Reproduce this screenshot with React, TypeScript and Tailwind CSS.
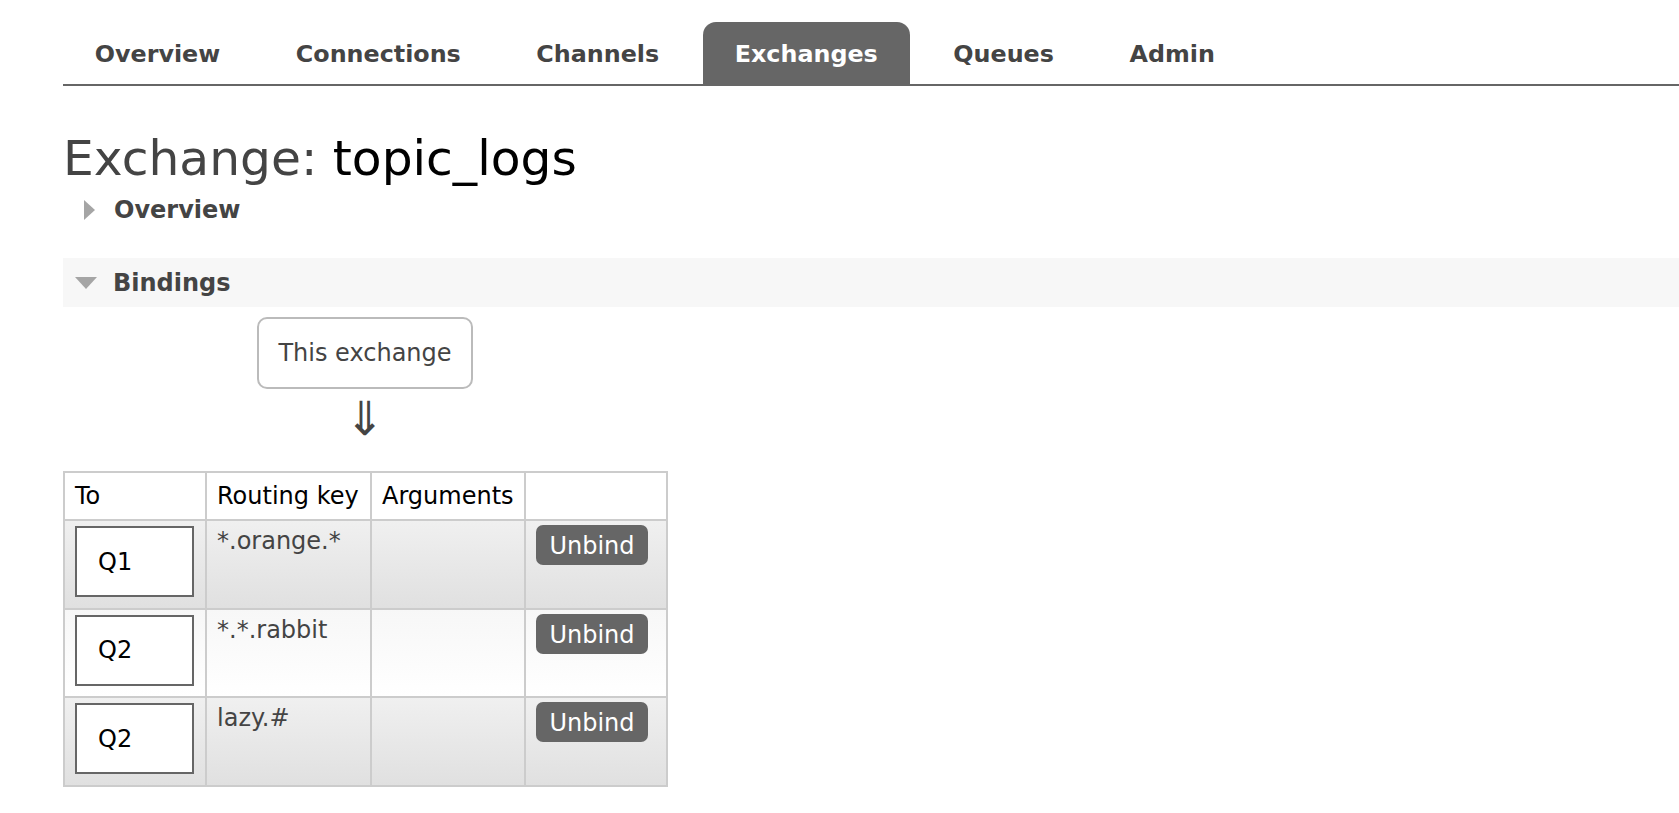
import React from "react";

const tabs = ["Overview", "Connections", "Channels", "Exchanges", "Queues", "Admin"];

const rows = [
  { to: "Q1", key: "*.orange.*", odd: true },
  { to: "Q2", key: "*.*.rabbit", odd: false },
  { to: "Q2", key: "lazy.#", odd: true },
];

export default function App() {
  return (
    <div className="min-h-screen w-full bg-white font-['DejaVu_Sans','Verdana',sans-serif] text-[24px] text-[#444]">
      <div className="pl-[63px] pt-[22px]">
        <ul className="flex gap-3 border-b-2 border-[#666]">
          {tabs.map((t) => (
            <li
              key={t}
              className={
                t === "Exchanges"
                  ? "flex h-[62px] items-center rounded-t-[13px] bg-[#666] px-[31.8px] pt-[4px] text-[23.8px] font-bold text-white"
                  : "flex h-[62px] items-center px-[31.8px] pt-[4px] text-[23.8px] font-bold text-[#444]"
              }
            >
              {t}
            </li>
          ))}
        </ul>

        <h1 className="mt-[44px] text-[48.7px] leading-[56px] font-normal text-[#444]">
          Exchange: <span className="text-black">topic_logs</span>
        </h1>

        <div className="mt-[10px] flex h-[28px] items-center">
          <div className="ml-[21px] mr-[19px] h-0 w-0 border-y-[10px] border-l-[11px] border-y-transparent border-l-[#a5a5a5]" />
          <span className="font-bold text-[#444]">Overview</span>
        </div>

        <div className="mt-[34px] flex h-[49px] items-center bg-[#f7f7f7]">
          <div className="ml-[12px] mr-[16px] h-0 w-0 border-x-[11px] border-t-[12px] border-x-transparent border-t-[#a5a5a5]" />
          <span className="font-bold text-[#444]">Bindings</span>
        </div>

        <div className="ml-[194px] mt-[10px] flex w-[216px] flex-col items-center">
          <div className="flex h-[72px] w-[216px] items-center justify-center rounded-[10px] border-2 border-[#bbb] text-[#444]">
            This exchange
          </div>
          <div className="mt-[4px] h-[52px] text-[47px] leading-[52px] text-[#444]">⇓</div>
        </div>

        <table className="mt-[26px] table-fixed border-collapse text-[24px]">
          <thead>
            <tr className="h-[48px] bg-white">
              <th className="w-[142px] border-2 border-[#ccc] px-[10px] text-left font-normal text-black">To</th>
              <th className="w-[165px] border-2 border-[#ccc] px-[10px] text-left font-normal text-black">Routing key</th>
              <th className="w-[154px] border-2 border-[#ccc] px-[10px] text-left font-normal text-black">Arguments</th>
              <th className="w-[142px] border-2 border-[#ccc] px-[10px] text-left font-normal text-black"></th>
            </tr>
          </thead>
          <tbody>
            {rows.map((r, i) => (
              <tr
                key={i}
                className={
                  r.odd
                    ? "bg-gradient-to-b from-[#f0f0f0] to-[#e0e0e0]"
                    : "bg-gradient-to-b from-[#f7f7f7] to-[#ffffff]"
                }
              >
                <td className="border-2 border-[#ccc] px-[10px] pt-[5px] pb-[10.5px] align-top">
                  <div className="flex h-[71px] w-[119px] items-center border-2 border-[#666] bg-white pl-[21px] text-black">
                    {r.to}
                  </div>
                </td>
                <td className="border-2 border-[#ccc] px-[10px] pt-[6px] align-top leading-[28px] text-[#444]">
                  {r.key}
                </td>
                <td className="border-2 border-[#ccc] px-[10px] align-top"></td>
                <td className="border-2 border-[#ccc] px-[10px] pt-[4px] align-top">
                  <button className="flex h-[40px] w-[112px] items-center justify-center rounded-[7px] bg-[#666] pt-[2px] text-[24px] text-white">
                    Unbind
                  </button>
                </td>
              </tr>
            ))}
          </tbody>
        </table>
      </div>
    </div>
  );
}
